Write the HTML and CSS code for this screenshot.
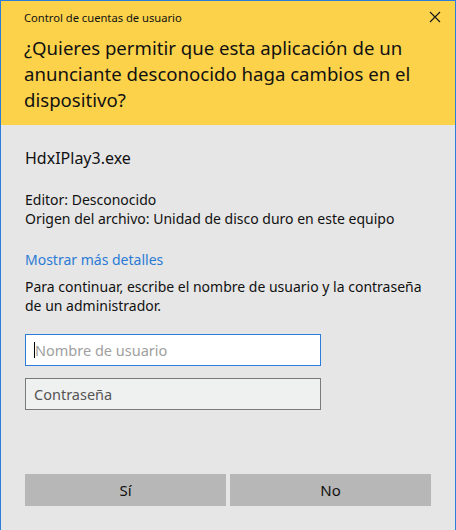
FILE: index.html
```html
<!DOCTYPE html>
<html lang="es">
<head>
<meta charset="utf-8">
<title>Control de cuentas de usuario</title>
<link rel="stylesheet" href="styles.css">
</head>
<body>
<div class="window">
  <div class="header">
    <div class="titlebar">
      <span class="title">Control de cuentas de usuario</span>
      <svg class="close" width="12" height="12" viewBox="0 0 12 12"><path d="M1 1 L11 11 M11 1 L1 11" stroke="#1a1a1a" stroke-width="1.2" fill="none"/></svg>
    </div>
    <h1 class="question">¿Quieres permitir que esta aplicación de un anunciante desconocido haga cambios en el dispositivo?</h1>
  </div>
  <div class="content">
    <div class="app">HdxIPlay3.exe</div>
    <div class="info">
      <div>Editor: Desconocido</div>
      <div>Origen del archivo: Unidad de disco duro en este equipo</div>
    </div>
    <a class="details" href="#">Mostrar más detalles</a>
    <p class="prompt">Para continuar, escribe el nombre de usuario y la contraseña de un administrador.</p>
    <div class="field focused"><span class="caret"></span><span class="placeholder">Nombre de usuario</span></div>
    <div class="field pw"><span class="placeholder dark">Contraseña</span></div>
    <div class="buttons">
      <button class="btn">Sí</button>
      <button class="btn">No</button>
    </div>
  </div>
</div>
</body>
</html>
```

FILE: styles.css
```css
html, body {
  margin: 0;
  padding: 0;
  background: #e6e6e6;
}
body {
  font-family: "Noto Sans", "Open Sans", sans-serif;
  color: #000;
}
.window {
  box-sizing: border-box;
  width: 456px;
  height: 530px;
  border-top: 1px solid #2b7ddc;
  border-left: 1px solid #2b7ddc;
  border-right: 1px solid #2b7ddc;
  background: #e6e6e6;
  display: flex;
  flex-direction: column;
}
.header {
  background: #fcd24b;
  height: 124px;
  box-sizing: border-box;
  padding: 0 0 0 23px;
}
.titlebar {
  display: flex;
  align-items: center;
  justify-content: space-between;
  height: 32px;
  padding-right: 14px;
}
.title {
  font-size: 11.2px;
  color: #111;
}
.close {
  display: block;
}
.question {
  margin: 2px 0 0 0;
  font-weight: normal;
  font-size: 18.6px;
  line-height: 26px;
  color: #111;
  padding-right: 20px;
}
.content {
  padding: 22px 24px 0 24px;
  display: flex;
  flex-direction: column;
}
.app {
  font-size: 16px;
  line-height: 22px;
  color: #111;
}
.info {
  margin-top: 21px;
  font-size: 14px;
  line-height: 19px;
  color: #111;
}
.details {
  margin-top: 22px;
  font-size: 14px;
  line-height: 19px;
  color: #2a7ad5;
  text-decoration: none;
}
.prompt {
  margin: 9px 0 0 0;
  font-size: 14px;
  line-height: 18.5px;
  color: #111;
}
.field {
  box-sizing: border-box;
  width: 296px;
  height: 32px;
  border: 1px solid #7a7a7a;
  background: #eff0f0;
  display: flex;
  align-items: center;
  padding-left: 8px;
  font-size: 14.5px;
}
.focused {
  margin-top: 19px;
  border-color: #2b7ddc;
  background: #fff;
}
.pw {
  margin-top: 12px;
}
.caret {
  width: 1px;
  height: 16px;
  background: #000;
}
.placeholder {
  color: #a0a0a0;
}
.placeholder.dark {
  color: #555;
}
.buttons {
  margin-top: 64px;
  display: flex;
  gap: 4px;
  width: 406px;
}
.btn {
  flex: 1;
  height: 32px;
  border: none;
  background: #b7b7b7;
  font-family: "Noto Sans", "Open Sans", sans-serif;
  font-size: 15px;
  color: #111;
  padding: 0;
}
```
